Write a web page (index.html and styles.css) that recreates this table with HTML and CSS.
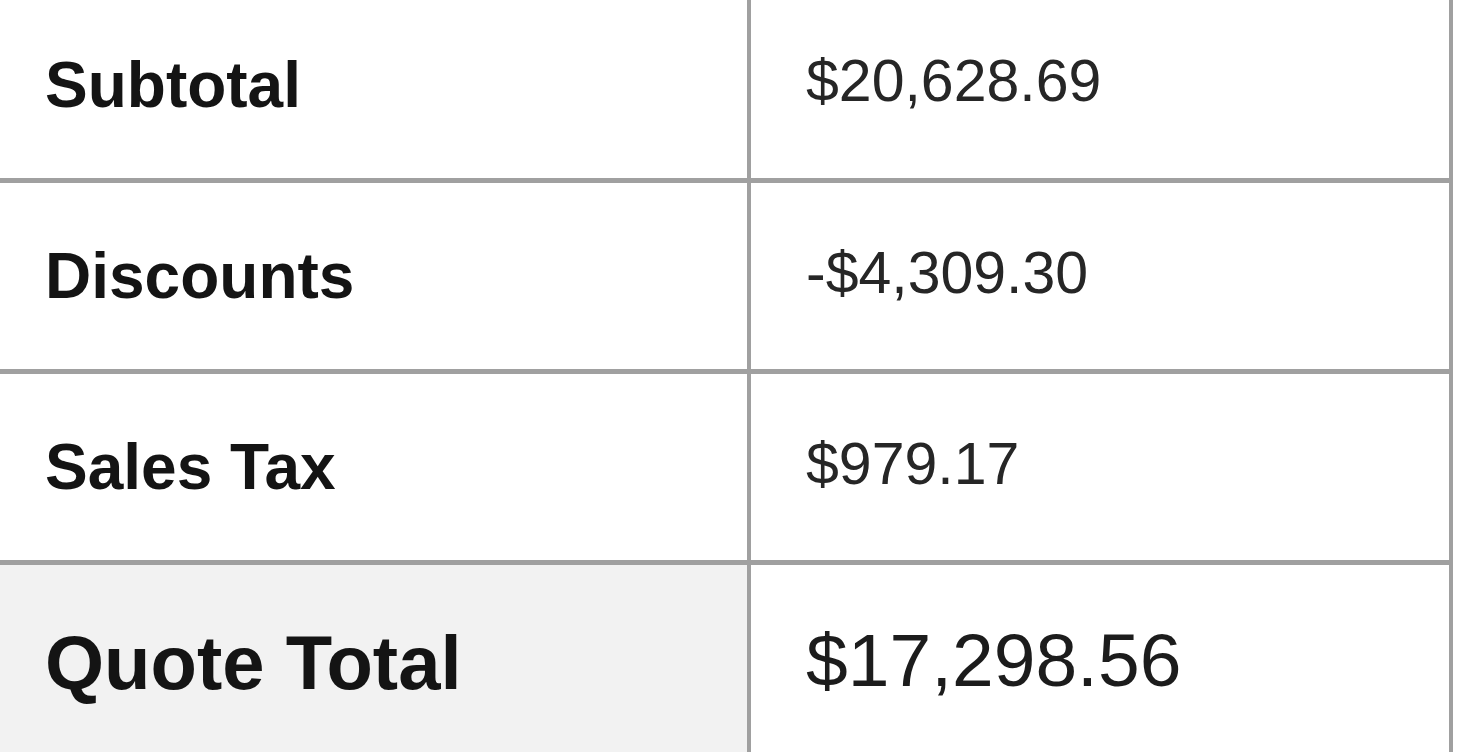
FILE: index.html
```html
<!DOCTYPE html>
<html>
<head>
<meta charset="utf-8">
<link rel="stylesheet" href="styles.css">
</head>
<body>
<div class="totals">
  <div class="cell label">Subtotal</div>
  <div class="cell value">$20,628.69</div>
  <div class="cell label">Discounts</div>
  <div class="cell value">-$4,309.30</div>
  <div class="cell label">Sales Tax</div>
  <div class="cell value">$979.17</div>
  <div class="cell label total-label">Quote Total</div>
  <div class="cell value total-value">$17,298.56</div>
</div>
</body>
</html>
```

FILE: styles.css
```css
html, body {
  margin: 0;
  padding: 0;
  background: #ffffff;
  overflow: hidden;
}

body {
  width: 1460px;
  height: 752px;
  font-family: "Liberation Sans", Arial, sans-serif;
}

.totals {
  display: grid;
  grid-template-columns: 747px 698px;
  grid-template-rows: 187px 186px 186px 196px;
  column-gap: 4px;
  row-gap: 5px;
  padding-right: 4px;
  width: 1449px;
  margin-top: -9px;
  background: #a0a0a0;
}

.cell {
  background: #ffffff;
  display: flex;
  align-items: center;
  line-height: 1;
  white-space: nowrap;
}

.label {
  padding-left: 45px;
  font-weight: bold;
  font-size: 64px;
  color: #141414;
}

.value {
  padding-left: 55px;
  padding-bottom: 6px;
  font-size: 59px;
  color: #262626;
}

.total-label {
  background: #f2f2f2;
  font-size: 76px;
}

.total-value {
  font-size: 75px;
  color: #1c1c1c;
}
```
